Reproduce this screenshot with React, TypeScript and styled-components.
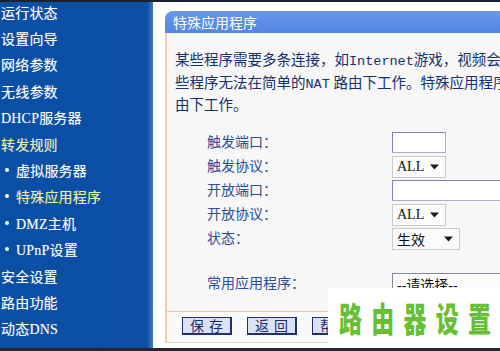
import React from "react";
import styled, { createGlobalStyle } from "styled-components";

const Global = createGlobalStyle`
  html, body { margin: 0; padding: 0; background: #ffffff; overflow: hidden; }
  body { width: 500px; height: 351px; }
  #root { width: 500px; height: 351px; }
`;

const FONT = `"Liberation Serif", "Noto Sans CJK SC", serif`;

const Frame = styled.div`
  position: relative;
  box-sizing: border-box;
  width: 500px;
  height: 351px;
  display: grid;
  grid-template-columns: 153px 1fr;
  border-top: 2px solid #1c2330;
  border-bottom: 3px solid #23272f;
  overflow: hidden;
  font-family: ${FONT};
`;

const Sidebar = styled.nav`
  background: linear-gradient(90deg, #0a4fa6 0%, #0b4ea4 96%, #3f79c0 100%);
  display: flex;
  flex-direction: column;
  overflow: hidden;
`;

const MenuList = styled.div`
  display: flex;
  flex-direction: column;
  margin-top: -3.5px;
`;

const MenuItem = styled.div<{ $sub?: boolean; $active?: boolean }>`
  height: 26.4px;
  display: flex;
  align-items: center;
  gap: 6px;
  padding-left: ${(p) => (p.$sub ? "5px" : "1px")};
  color: ${(p) => (p.$active ? "#eef2a8" : "#ffffff")};
  font-size: 14px;
  white-space: nowrap;
  letter-spacing: 0.2px;
  text-shadow: 0 0 1px rgba(255, 255, 255, 0.35);
`;

const Bullet = styled.span`
  width: 4px;
  height: 4px;
  border-radius: 50%;
  background: #ffffff;
  margin-right: 1px;
`;

const Main = styled.main`
  padding: 9px 0 0 12px;
  overflow: hidden;
`;

const Panel = styled.section`
  width: 420px;
  border-left: 2px solid #f0cfa2;
  border-bottom: 1px solid #f0d6b0;
  border-top-left-radius: 9px;
  background: #f7f7f7;
  display: flex;
  flex-direction: column;
`;

const PanelHeader = styled.header`
  height: 22px;
  display: flex;
  align-items: center;
  border-top-left-radius: 8px;
  background: linear-gradient(180deg, #6b9bec 0%, #5a8de6 50%, #5487e2 100%);
  color: #ffffff;
  font-size: 14px;
  margin-left: -2px;
  padding-left: 8px;
`;

const PanelBody = styled.div`
  padding: 17px 0 15px 8px;
`;

const Desc = styled.div`
  color: #14306e;
  font-size: 14.5px;
  line-height: 21.5px;
  white-space: nowrap;
`;

const Latin = styled.span`
  font-family: "Liberation Mono", monospace;
  font-size: 13.5px;
`;

const Form = styled.div`
  margin-top: 14px;
  padding-left: 32px;
  display: flex;
  flex-direction: column;
`;

const Row = styled.div<{ $gapBefore?: number }>`
  height: 24px;
  display: grid;
  grid-template-columns: 185px 1fr;
  align-items: center;
  margin-top: ${(p) => p.$gapBefore ?? 0}px;
`;

const Label = styled.div`
  color: #2b4b9c;
  font-size: 14px;
  white-space: nowrap;
  margin-top: -4px;
`;

const TextBox = styled.div<{ $w: number }>`
  box-sizing: border-box;
  width: ${(p) => p.$w}px;
  height: 21px;
  background: #ffffff;
  border: 1px solid #7a88b2;
  border-right-color: #a8b2cc;
  border-bottom-color: #a8b2cc;
`;

const SelectBox = styled.div<{ $w: number; $dark?: boolean }>`
  box-sizing: border-box;
  width: ${(p) => p.$w}px;
  height: 22px;
  display: flex;
  align-items: center;
  justify-content: space-between;
  padding: 0 6px 0 4px;
  background: #fbfbfb;
  border: 1px solid ${(p) => (p.$dark ? "#7f8798" : "#c9c9c9")};
  box-shadow: inset 1px 1px 0 #ffffff;
  color: #111111;
  font-size: 14px;
  white-space: nowrap;
`;

const Caret = () => (
  <svg width="9" height="6" viewBox="0 0 9 6">
    <path d="M0 0.5 H9 L4.5 5.5 Z" fill="#1a1a1a" />
  </svg>
);

const Footer = styled.footer`
  height: 31px;
  border-top: 1px solid #f0c998;
  background: #fafafa;
  display: flex;
  align-items: flex-start;
  gap: 15px;
  padding: 5px 0 0 15px;
  box-sizing: border-box;
`;

const Button = styled.div`
  box-sizing: border-box;
  width: 50px;
  height: 18px;
  display: flex;
  align-items: center;
  justify-content: center;
  background: #dce2f6;
  border: 1px solid #22306e;
  border-right-width: 2px;
  border-bottom-width: 2px;
  color: #1b2a66;
  font-size: 14px;
  letter-spacing: 5px;
  padding-left: 5px;
  white-space: nowrap;
`;

const Watermark = styled.div`
  position: absolute;
  right: 0;
  bottom: 0;
  width: 172px;
  height: 60px;
  background: #ffffff;
  display: flex;
  align-items: center;
  justify-content: center;
  padding: 0 0 2px 4px;
  box-sizing: border-box;
`;

const WatermarkText = styled.span`
  font-family: "Noto Sans CJK SC", sans-serif;
  font-weight: 900;
  font-size: 23px;
  line-height: 1;
  letter-spacing: 2px;
  color: #67bf35;
  transform: scaleY(1.5);
  white-space: pre;
`;

const menu: { text: string; sub?: boolean; active?: boolean }[] = [
  { text: "运行状态" },
  { text: "设置向导" },
  { text: "网络参数" },
  { text: "无线参数" },
  { text: "DHCP服务器" },
  { text: "转发规则", active: true },
  { text: "虚拟服务器", sub: true },
  { text: "特殊应用程序", sub: true, active: true },
  { text: "DMZ主机", sub: true },
  { text: "UPnP设置", sub: true },
  { text: "安全设置" },
  { text: "路由功能" },
  { text: "动态DNS" },
];

export default function App() {
  return (
    <>
      <Global />
      <Frame>
        <Sidebar>
          <MenuList>
            {menu.map((m) => (
              <MenuItem key={m.text} $sub={m.sub} $active={m.active}>
                {m.sub && <Bullet />}
                {m.text}
              </MenuItem>
            ))}
          </MenuList>
        </Sidebar>
        <Main>
          <Panel>
            <PanelHeader>特殊应用程序</PanelHeader>
            <PanelBody>
              <Desc>
                <div>
                  某些程序需要多条连接，如<Latin>Internet</Latin>游戏，视频会议等。这
                </div>
                <div>
                  些程序无法在简单的<Latin>NAT</Latin> 路由下工作。特殊应用程序使得某些程序能够在NAT路
                </div>
                <div>由下工作。</div>
              </Desc>
              <Form>
                <Row>
                  <Label>触发端口：</Label>
                  <TextBox $w={54} />
                </Row>
                <Row>
                  <Label>触发协议：</Label>
                  <SelectBox $w={54}>
                    ALL <Caret />
                  </SelectBox>
                </Row>
                <Row>
                  <Label>开放端口：</Label>
                  <TextBox $w={160} />
                </Row>
                <Row>
                  <Label>开放协议：</Label>
                  <SelectBox $w={54}>
                    ALL <Caret />
                  </SelectBox>
                </Row>
                <Row>
                  <Label>状态：</Label>
                  <SelectBox $w={68}>
                    生效 <Caret />
                  </SelectBox>
                </Row>
                <Row $gapBefore={21}>
                  <Label>常用应用程序：</Label>
                  <SelectBox $w={160} $dark>
                    --请选择--
                  </SelectBox>
                </Row>
              </Form>
            </PanelBody>
            <Footer>
              <Button>保存</Button>
              <Button>返回</Button>
              <Button>帮助</Button>
            </Footer>
          </Panel>
        </Main>
        <Watermark>
          <WatermarkText>路 由 器 设 置</WatermarkText>
        </Watermark>
      </Frame>
    </>
  );
}
